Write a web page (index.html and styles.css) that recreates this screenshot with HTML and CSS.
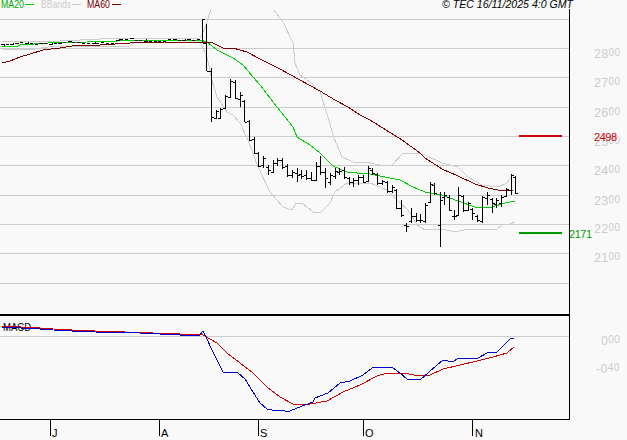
FILE: index.html
```html
<!DOCTYPE html>
<html lang="en">
<head>
<meta charset="utf-8">
<title>TEC chart</title>
<link rel="stylesheet" href="styles.css">
</head>
<body>
<svg class="chart" width="627" height="440" viewBox="0 0 627 440" xmlns="http://www.w3.org/2000/svg">
  <path class="grid" d="M0 19.5H569M0 48.5H569M0 77.5H569M0 107.5H569M0 136.5H569M0 165.5H569M0 195.5H569M0 224.5H569M0 253.5H569M0 283.5H569M0 336.5H569"/>

  <polyline class="band" points="2,41 60,41 100,39 200,38 205,28 211,9"/>
  <polyline class="band" points="274,10 283,22 293,43 295,63 300,75 310,82 320,92 328,117 334,138 342,157 353,162 370,163 380,165 392,165 403,153 417,153 425,155 442,163 458,167 468,177 482,185 498,187 507,183 513,175"/>
  <polyline class="band" points="2,50 35,49 48,47 130,46 135,42 200,42 207,57 212,80 217,97 227,112 233,115 240,123 248,140 258,167 270,192 283,207 292,210 296,203 302,203 313,212 320,213 330,203 335,192 347,183 370,183 387,190 397,200 408,210 417,225 425,230 442,229 455,232 468,229 497,229 502,225 510,224 515,222"/>

  <polyline class="ma20" points="2,46 18,46 20,45 48,43 87,42 117,41 143,40 200,40 207,42 217,50 233,58 243,65 253,77 260,85 277,107 293,127 297,137 310,145 320,153 333,166 347,172 357,173 370,174 400,180 413,187 425,192 442,195 458,201 475,207 492,207 505,203 515,201"/>
  <polyline class="ma60" points="2,63 10,61 20,57 30,54 43,50 60,48 72,46 100,45 130,43 165,42 203,42 213,43 223,48 233,48 247,52 260,59 280,69 300,80 320,91 335,100 348,107 360,115 370,120 402,140 420,153 425,158 442,169 458,176 475,184 488,188 498,190 513,190"/>

  <path class="bars" d="M1 44h3v1h1M6 44h3M10 44h3v-1M15 43h3v1M20 42h3M25 43h3v-1M30 43h3M35 44h3M39 43h3v1M44 43h3M49 44h3v-1M54 43h3M58 43h3v-1M63 42h3M68 41h3v1M72 42h3M77 42h3v1M82 43h3M87 43h3M92 43h3v-1M96 43h3M101 42h3M106 43h3M111 43h3M116 40h3v-1M120 39h3M125 39h3M130 38h3v1M135 40h3M139 40h3M146 39V43M144 41h4M149 41h3M154 41h3M158 41h3M163 41h3M168 39h3M173 39h3v1M178 40h3M182 40h3v-1M187 39h3v1M192 40h3M197 39h3"/>
  <path class="bars" d="M202.500 19V42M198 42H202M203 19H205M206.500 24V71M203 43H206M207 71H209M211.500 68V122M209 71H211M212 117H214M216.500 110V119M214 118H216M217 111H219M220.500 108V119M218 118H220M221 109H223M225.500 95V109M223 108H225M226 96H228M230.500 79V98M228 97H230M231 81H233M235.500 80V99M233 82H235M236 98H238M240.500 92V107M238 99H240M241 95H243M244.500 100V122M242 101H244M245 122H247M249.500 120V141M247 121H249M250 140H252M254.500 137V154M252 139H254M255 153H257M258.500 152V167M256 153H258M259 166H261M263.500 156V168M261 165H263M264 158H266M268.500 165V175M266 167H268M269 170H271M273.500 160V173M271 172H273M274 163H276M277.500 158V166M275 163H277M278 160H280M282.500 158V169M280 160H282M283 167H285M287.500 164V177M285 166H287M288 175H290M292.500 170V178M290 175H292M293 172H295M297.500 168V182M295 173H297M298 175H300M301.500 170V179M299 174H301M302 176H304M306.500 170V180M304 175H306M307 178H309M311.500 172V181M309 178H311M312 180H314M316.500 162V181M314 180H316M317 166H319M320.500 156V175M318 166H320M321 172H323M325.500 168V188M323 172H325M326 178H328M330.500 173V185M328 182H330M331 175H333M335.500 168V179M333 176H335M336 171H338M339.500 168V175M337 172H339M340 171H342M344.500 167V179M342 170H344M345 177H347M349.500 177V185M347 178H349M350 182H352M353.500 178V187M351 182H353M354 180H356M358.500 175V185M356 180H358M359 177H361M363.500 175V183M361 177H363M364 182H366M368.500 166V182M366 181H368M369 168H371M372.500 168V175M370 170H372M373 173H375M377.500 173V185M375 174H377M378 183H380M382.500 180V185M380 183H382M383 181H385M387.500 181V193M385 182H387M388 191H390M392.500 185V193M390 191H392M393 187H395M396.500 189V209M394 190H396M397 208H399M401.500 200V217M399 208H401M402 215H404M406.500 223V232M404 225H406M407 226H409M411.500 208V223M409 221H411M412 216H414M416.500 213V222M414 216H416M417 220H419M420.500 214V223M418 220H420M421 220H423M425.500 203V223M423 221H425M426 205H428M430.500 182V203M428 202H430M431 184H433M434.500 183V195M432 185H434M435 193H437M440.500 192V247M438 225H440M441 200H443M444.500 192V205M442 197H444M445 195H447M449.500 195V211M447 197H449M450 210H452M454.500 210V220M452 216H454M455 216H457M458.500 187V216M456 215H458M459 195H461M463.500 195V212M461 196H463M464 210H466M468.500 202V211M466 210H468M469 203H471M472.500 208V220M470 209H472M473 213H475M477.500 215V222M475 216H477M478 220H480M482.500 196V223M480 221H482M483 197H485M487.500 192V205M485 198H487M488 195H490M492.500 198V213M490 199H492M493 203H495M496.500 198V208M494 204H496M497 200H499M501.500 195V207M499 203H501M502 197H504M506.500 188V197M504 196H506M507 189H509M511.500 174V195M509 190H511M512 175H514M515.500 176V194M513 177H515M516 193H518"/>

  <rect class="hi" x="519" y="135" width="43" height="2"/>
  <rect class="lo" x="519" y="232" width="43" height="2"/>

  <path class="frame-thick" d="M0 315H569"/>
  <path class="frame" d="M0 419.500H569.500M569.500 9V419.500M50.500 419V436M159.500 419V436M258.500 419V436M363.500 419V436M472.500 419V436"/>

  <text class="t legend" x="3" y="331" textLength="28" lengthAdjust="spacingAndGlyphs">MACD</text>
  <polyline class="macd-sig" points="2,326 40,328 60,329.500 95,331 140,332.500 180,334 203,335 217,343 227,353 240,363 253,373 267,387 280,397 293,404 310,404 327,401 343,392 360,385 377,376 387,373 403,373 420,376 430,375 443,369 460,365 477,361 493,357 507,353 514,347"/>
  <polyline class="macd" points="2,327 40,329 60,330.500 95,332 140,333 180,335 200,335 203,331 207,339 212,350 218,362 223,372 228,372 238,373 245,379 253,392 260,403 267,409 272,410 285,411 290,411 297,408 305,405 313,402 315,398 328,393 340,383 350,381 363,375 372,368 392,367 400,373 407,379 420,380 437,365 443,360 453,362 458,358 470,358 478,358 487,353 497,352 503,346 510,339 514,338"/>

  <path class="key-20" d="M25 4.500H34"/>
  <path class="key-bb" d="M72 4.500H81"/>
  <path class="key-60" d="M112 4.500H121"/>
  <text class="t legend c-20" x="1" y="8" textLength="23" lengthAdjust="spacingAndGlyphs">MA20</text>
  <text class="t legend c-bb" x="41" y="8" textLength="30" lengthAdjust="spacingAndGlyphs">BBands</text>
  <text class="t legend c-60" x="87" y="8" textLength="23" lengthAdjust="spacingAndGlyphs">MA60</text>
  <text class="t stamp" x="442" y="8" textLength="131" lengthAdjust="spacingAndGlyphs">© TEC 16/11/2025 4:0 GMT</text>

  <text class="t axis" x="594" y="58">28<tspan class="small" dy="-2">00</tspan></text>
  <text class="t axis" x="594" y="87">27<tspan class="small" dy="-2">00</tspan></text>
  <text class="t axis" x="594" y="117">26<tspan class="small" dy="-2">00</tspan></text>
  <text class="t axis" x="594" y="146">25<tspan class="small" dy="-2">00</tspan></text>
  <text class="t axis" x="594" y="175">24<tspan class="small" dy="-2">00</tspan></text>
  <text class="t axis" x="594" y="205">23<tspan class="small" dy="-2">00</tspan></text>
  <text class="t axis" x="594" y="233">22<tspan class="small" dy="-2">00</tspan></text>
  <text class="t axis" x="594" y="262">21<tspan class="small" dy="-2">00</tspan></text>
  <text class="t axis" x="601" y="345">0<tspan class="small" dy="-2">00</tspan></text>
  <text class="t axis" x="596" y="373">-0<tspan class="small" dy="-2">40</tspan></text>

  <text class="t level c-hi" x="594" y="141" textLength="23" lengthAdjust="spacing">2498</text>
  <text class="t level c-lo" x="569" y="238" textLength="23" lengthAdjust="spacing">2171</text>

  <text class="t month" x="52" y="437">J</text>
  <text class="t month" x="161" y="437">A</text>
  <text class="t month" x="260" y="437">S</text>
  <text class="t month" x="365" y="437">O</text>
  <text class="t month" x="475" y="437">N</text>
</svg>
</body>
</html>
```

FILE: styles.css
```css
html, body {
  margin: 0;
  padding: 0;
  background: #f9f9f9;
}

.chart {
  display: block;
  background: #f9f9f9;
}

.grid, .band, .ma20, .ma60, .bars, .frame, .frame-thick,
.macd, .macd-sig, .key-20, .key-bb, .key-60 {
  fill: none;
  stroke-width: 1;
  shape-rendering: crispEdges;
}

.grid { stroke: #cccccc; }
.band { stroke: #cccccc; }
.ma20 { stroke: #00cc00; }
.ma60 { stroke: #7a0000; }
.bars { stroke: #000000; }
.frame { stroke: #000000; }
.frame-thick { stroke: #000000; stroke-width: 2; }
.macd { stroke: #0000cc; }
.macd-sig { stroke: #cc0000; }
.key-20 { stroke: #00cc00; }
.key-bb { stroke: #cccccc; }
.key-60 { stroke: #7a0000; }

.hi { fill: #cc0000; shape-rendering: crispEdges; }
.lo { fill: #009900; shape-rendering: crispEdges; }

.t {
  font-family: "Liberation Sans", Arial, sans-serif;
}

.legend { font-size: 10px; fill: #000000; }
.c-20 { fill: #00aa00; }
.c-bb { fill: #cccccc; }
.c-60 { fill: #7a0000; }

.stamp { font-size: 11px; font-style: italic; fill: #000000; }

.axis { font-size: 12.500px; letter-spacing: 0.300px; fill: #cccccc; }
.small { font-size: 10px; letter-spacing: 0.500px; }

.level { font-size: 11px; }
.c-hi { fill: #cc0000; }
.c-lo { fill: #009900; }

.month { font-size: 11px; fill: #000000; }
```
